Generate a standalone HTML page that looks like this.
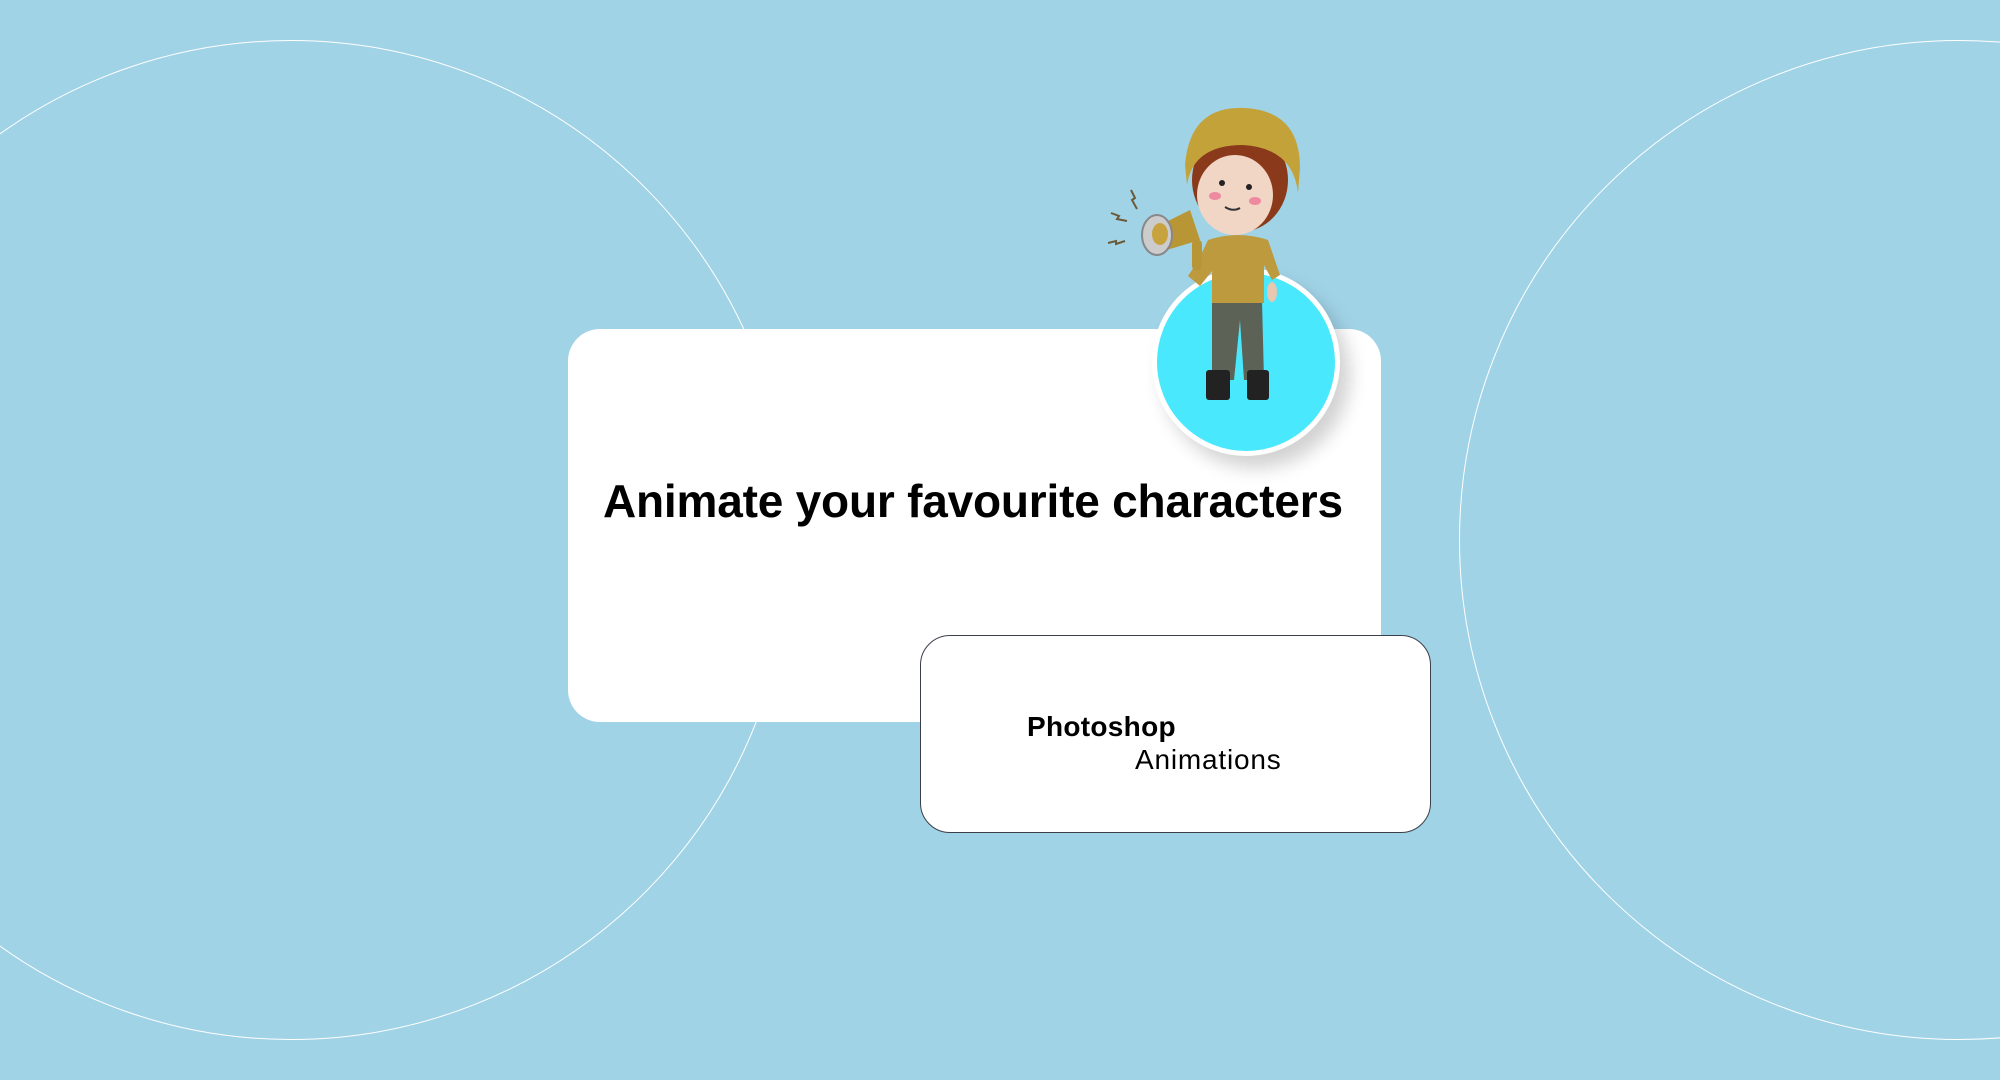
<!DOCTYPE html>
<html><head><meta charset="utf-8"><style>
html,body{margin:0;padding:0}
body{width:2000px;height:1080px;background:#a1d3e7;position:relative;overflow:hidden;font-family:"Liberation Sans",sans-serif}
.circ{position:absolute;border:1.5px solid #fff;border-radius:50%;width:1000px;height:1000px;box-sizing:border-box}
.card{position:absolute;left:568px;top:329px;width:813px;height:393px;background:#fff;border-radius:32px}
.title{position:absolute;left:603px;top:474px;white-space:nowrap;font-weight:bold;font-size:46px;color:#000;letter-spacing:-0.2px}
.card2{position:absolute;left:920px;top:635px;width:511px;height:198px;background:#fff;border:1.5px solid #3a3f4a;border-radius:30px;box-sizing:border-box}
.p{position:absolute;left:1027px;top:711px;font-weight:bold;font-size:28px;color:#000;white-space:nowrap;letter-spacing:0.3px}
.a{position:absolute;left:1135px;top:744px;font-size:28px;color:#000;white-space:nowrap;letter-spacing:0.8px}
.bc{position:absolute;left:1152px;top:268px;width:188px;height:188px;border-radius:50%;background:#4ae8fc;border:5px solid #fff;box-sizing:border-box;box-shadow:10px 12px 18px rgba(0,0,0,0.18)}
</style></head><body>
<div class="circ" style="left:-209px;top:40px"></div>
<div class="circ" style="left:1459px;top:40px"></div>
<div class="card"></div>
<div class="title">Animate your favourite characters</div>
<div class="card2"></div>
<div class="p">Photoshop</div>
<div class="a">Animations</div>
<div class="bc"></div>
<svg style="position:absolute;left:0;top:0" width="2000" height="1080">
 <path d="M1131 190l4 8-3 2 5 9" stroke="#6b5a3a" stroke-width="2" fill="none"/>
 <path d="M1111 213l8 3-2 3 10 2" stroke="#6b5a3a" stroke-width="2" fill="none"/>
 <path d="M1108 243l8-2v3l9-3" stroke="#6b5a3a" stroke-width="2" fill="none"/>
 <path d="M1212 300h50l2 80h-20l-4-60-6 60h-22z" fill="#5d6256"/>
 <rect x="1206" y="370" width="24" height="30" rx="3" fill="#222"/>
 <rect x="1247" y="370" width="22" height="30" rx="3" fill="#222"/>
 <path d="M1208 240q30-10 60 0l12 35-8 5-8-15v38h-52v-32l-12 15-12-10 10-15z" fill="#bd9a3e"/>
 <ellipse cx="1272" cy="292" rx="5" ry="10" fill="#e8c7b0"/>
 <path d="M1150 230l40-20 10 30-40 12z" fill="#b89535"/>
 <ellipse cx="1157" cy="235" rx="15" ry="20" fill="#ccc" stroke="#888" stroke-width="2"/>
 <ellipse cx="1160" cy="234" rx="8" ry="11" fill="#c7a23e"/>
 <rect x="1192" y="240" width="10" height="30" rx="4" fill="#b89535"/>
 <ellipse cx="1240" cy="180" rx="48" ry="52" fill="#8a3a1a"/>
 <ellipse cx="1235" cy="195" rx="38" ry="40" fill="#f1d6c6"/>
 <path d="M1185 165q5-60 60-57q55 3 55 60l-2 25q-5-45-55-48q-50 0-56 40z" fill="#c4a23a"/>
 <circle cx="1222" cy="183" r="3" fill="#222"/>
 <circle cx="1249" cy="187" r="3" fill="#222"/>
 <ellipse cx="1215" cy="196" rx="6" ry="4" fill="#ee8aa0"/>
 <ellipse cx="1255" cy="201" rx="6" ry="4" fill="#ee8aa0"/>
 <path d="M1225 207q8 5 15 1" stroke="#333" stroke-width="2" fill="none"/>
</svg>
</body></html>
